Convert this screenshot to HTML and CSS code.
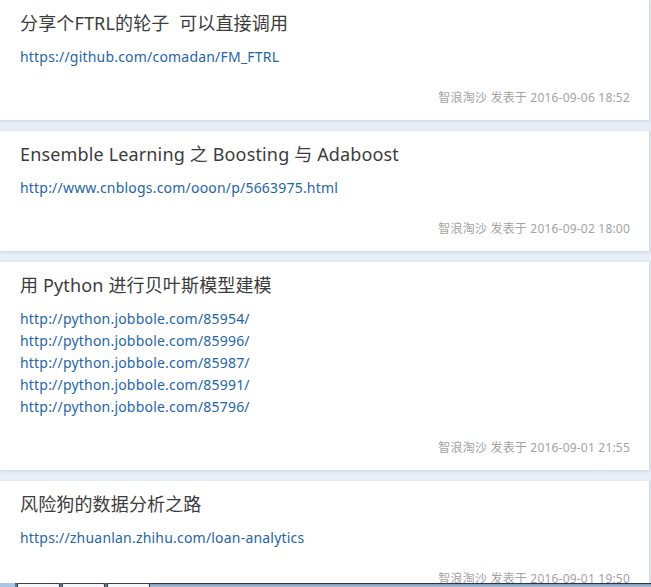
FILE: index.html
```html
<!DOCTYPE html>
<html lang="zh-CN">
<head>
<meta charset="utf-8">
<title>Posts</title>
<link rel="stylesheet" href="styles.css">
</head>
<body>
<div class="list">
  <div class="card">
    <h2 class="title">分享个FTRL的轮子&nbsp; 可以直接调用</h2>
    <div class="links">
      <a href="#">https://github.com/comadan/FM_FTRL</a>
    </div>
    <div class="meta">智浪淘沙 发表于 2016-09-06 18:52</div>
  </div>
  <div class="card">
    <h2 class="title">Ensemble Learning 之 Boosting 与 Adaboost</h2>
    <div class="links">
      <a href="#">http://www.cnblogs.com/ooon/p/5663975.html</a>
    </div>
    <div class="meta">智浪淘沙 发表于 2016-09-02 18:00</div>
  </div>
  <div class="card">
    <h2 class="title">用 Python 进行贝叶斯模型建模</h2>
    <div class="links">
      <a href="#">http://python.jobbole.com/85954/</a>
      <a href="#">http://python.jobbole.com/85996/</a>
      <a href="#">http://python.jobbole.com/85987/</a>
      <a href="#">http://python.jobbole.com/85991/</a>
      <a href="#">http://python.jobbole.com/85796/</a>
    </div>
    <div class="meta">智浪淘沙 发表于 2016-09-01 21:55</div>
  </div>
  <div class="card">
    <h2 class="title">风险狗的数据分析之路</h2>
    <div class="links">
      <a href="#">https://zhuanlan.zhihu.com/loan-analytics</a>
    </div>
    <div class="meta">智浪淘沙 发表于 2016-09-01 19:50</div>
  </div>
</div>
<div class="taskbar">
  <span class="tb-start"></span>
  <span class="tb-tab"></span>
  <span class="tb-tab"></span>
  <span class="tb-tab"></span>
  <span class="tb-rest"></span>
</div>
</body>
</html>
```
FILE: styles.css
```css
html, body {
  margin: 0;
  padding: 0;
}
body {
  background: #e8eef6;
  font-family: "Noto Sans", "Noto Sans CJK SC", sans-serif;
  overflow: hidden;
}
.list {
  display: flex;
  flex-direction: column;
  gap: 11px;
  width: 650px;
}
.card {
  background: #fff;
  padding: 10px 19px 12.5px 20px;
  border-right: 1px solid #d6dbe2;
  box-shadow: 0 1px 3px rgba(120, 140, 170, 0.25);
}
.title {
  margin: 0;
  font-size: 18px;
  line-height: 26px;
  font-weight: normal;
  letter-spacing: 0.15px;
  color: #3c3c3c;
}
.links {
  margin-top: 10px;
  display: flex;
  flex-direction: column;
  font-size: 14px;
  line-height: 22px;
  letter-spacing: 0.2px;
}
.links a {
  color: #1f65a8;
  text-decoration: none;
}
.meta {
  margin-top: 19.5px;
  text-align: right;
  font-size: 12px;
  line-height: 20px;
  letter-spacing: 0.2px;
  color: #a3a3a3;
}
.taskbar {
  position: fixed;
  left: 0;
  right: 0;
  bottom: 0;
  height: 4px;
  display: flex;
  background: linear-gradient(#4a5c70, #6f8fb3);
}
.tb-start {
  width: 15px;
  background: #a8c4e6;
}
.tb-tab {
  width: 43px;
  margin-left: 2px;
  background: #f4f6f8;
  border: 1px solid #3b3f45;
  border-bottom: none;
  border-radius: 2px 2px 0 0;
  box-sizing: border-box;
}
.tb-rest {
  flex: 1;
  border-top: 1px solid #30363e;
  background: linear-gradient(#7d96b5, #a9c3e0);
}
```
